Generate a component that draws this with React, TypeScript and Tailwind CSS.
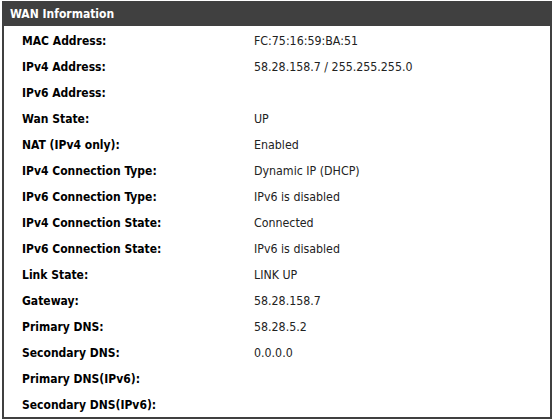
const rows: [string, string][] = [
  ['MAC Address:', 'FC:75:16:59:BA:51'],
  ['IPv4 Address:', '58.28.158.7 / 255.255.255.0'],
  ['IPv6 Address:', ''],
  ['Wan State:', 'UP'],
  ['NAT (IPv4 only):', 'Enabled'],
  ['IPv4 Connection Type:', 'Dynamic IP (DHCP)'],
  ['IPv6 Connection Type:', 'IPv6 is disabled'],
  ['IPv4 Connection State:', 'Connected'],
  ['IPv6 Connection State:', 'IPv6 is disabled'],
  ['Link State:', 'LINK UP'],
  ['Gateway:', '58.28.158.7'],
  ['Primary DNS:', '58.28.5.2'],
  ['Secondary DNS:', '0.0.0.0'],
  ['Primary DNS(IPv6):', ''],
  ['Secondary DNS(IPv6):', ''],
];

export default function App() {
  return (
    <div className="h-[420px] w-[555px] bg-white pl-[2px] pt-[1px] font-['DejaVu_Sans_Condensed','DejaVu_Sans',sans-serif] text-[12px]">
      <div className="h-[418px] w-[550px] border-x-2 border-b-2 border-[#404040]">
        <div className="-mx-[2px] flex h-[25px] items-center bg-[#404040] pl-[8px] font-bold text-white">
          WAN Information
        </div>
        <div className="pt-[2px]">
          {rows.map(([label, value]) => (
            <div key={label} className="flex h-[26px] items-center">
              <div className="w-[250px] pl-[18px] font-bold text-black">{label}</div>
              <div className="text-[12.3px] text-[#222]">{value}</div>
            </div>
          ))}
        </div>
      </div>
    </div>
  );
}
